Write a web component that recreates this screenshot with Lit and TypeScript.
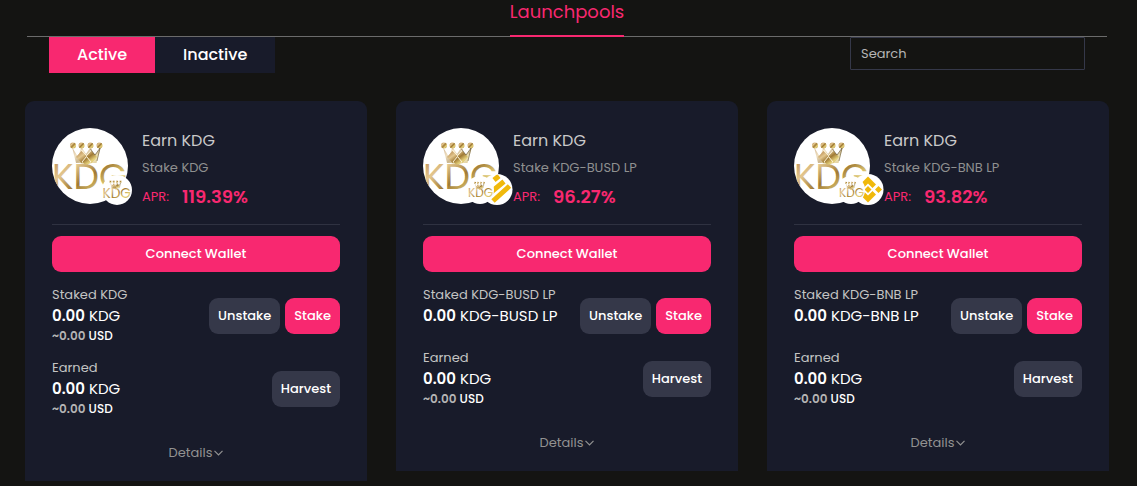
import { LitElement, html, css, svg, nothing } from "lit";
import { customElement, property, state } from "lit/decorators.js";

type Pair = "" | "BUSD" | "BNB";

interface Pool {
  token: string;
  pair: Pair;
  apr: string;
  stakedUsd: boolean;
}

const POOLS: Pool[] = [
  { token: "KDG", pair: "", apr: "119.39%", stakedUsd: true },
  { token: "KDG-BUSD LP", pair: "BUSD", apr: "96.27%", stakedUsd: false },
  { token: "KDG-BNB LP", pair: "BNB", apr: "93.82%", stakedUsd: false },
];

@customElement("pool-logo")
export class PoolLogo extends LitElement {
  static styles = css`
    :host {
      display: block;
      flex: none;
      width: 76px;
      height: 77px;
    }
    .logo {
      display: block;
      overflow: visible;
    }
    .word {
      font-family: Poppins, Lato, sans-serif;
      font-size: 36px;
    }
  `;

  @property() pair: Pair = "";

  private mark() {
    return svg`
      <g fill="url(#gold)">
        <circle cx="21" cy="17.500" r="3"></circle>
        <circle cx="29.500" cy="17.500" r="3"></circle>
        <circle cx="38.500" cy="17.500" r="3"></circle>
        <circle cx="47.500" cy="17.500" r="3"></circle>
        <path d="M20 19L26 29L29.500 19L34 26L38.500 19L42 28L49 19L44.500 35H40L34 37L28 35H24Z" opacity=".55"></path>
        <path d="M29.500 23L35 29L29.500 35L24 29ZM39.500 23L45 29L39.500 35L34 29ZM34.500 29L39 33.500L34.500 38L30 33.500Z"></path>
      </g>
      <path d="M29.500 22L34.500 27.500L39.500 22M30 34L34.500 28.500L39 34" fill="none" stroke="#fff6dc"></path>
      <path d="M38.500 21L43 27L48 20L45 33" fill="none" stroke="#4a3a1c" opacity=".5"></path>
      <text class="word" x="0" y="61" fill="url(#gold)">KDG</text>`;
  }

  private pairIcon() {
    if (this.pair === "BUSD") {
      return svg`<g fill="none" stroke="#f0b90b" stroke-width="5" transform="translate(74 61.500)">
        <path d="M-3 -9.500L2 -13.500M-10 6L7 -8M-4 11.500L12.500 -3.500"></path></g>`;
    }
    return svg`<g fill="#f0b90b" transform="translate(74 61.500)">
      <path d="M0 -13l8 8-3.500 3.500-4.500-4.500-4.500 4.500-3.500-3.500zM0 13l8-8-3.500-3.500-4.500 4.500-4.500-4.500-3.500 3.500zM0 -3.500l3.500 3.500-3.500 3.500-3.500-3.500zM10.500 -3.500l3.500 3.500-3.500 3.500-3.500-3.500z"></path></g>`;
  }

  render() {
    const small = this.pair
      ? { cx: 57, r: 14, place: "translate(45 49) scale(.335)" }
      : { cx: 65, r: 15, place: "translate(50.500 47) scale(.38)" };
    return html`<svg class="logo" width="76" height="77" viewBox="0 0 76 77" aria-hidden="true">
      <defs>
        <linearGradient id="gold" x1="0" y1="0" x2="1" y2="1">
          <stop offset="0" stop-color="#a8753a"></stop>
          <stop offset=".3" stop-color="#e3c78f"></stop>
          <stop offset=".5" stop-color="#a07a34"></stop>
          <stop offset=".7" stop-color="#e6d27c"></stop>
          <stop offset="1" stop-color="#b08a3c"></stop>
        </linearGradient>
        <clipPath id="disc"><circle cx="38" cy="38" r="38"></circle></clipPath>
        <clipPath id="pair"><circle cx="74" cy="61.500" r="15"></circle></clipPath>
      </defs>
      <circle cx="38" cy="38" r="38" fill="#fff"></circle>
      <g clip-path="url(#disc)">${this.mark()}</g>
      ${this.pair
        ? svg`<circle cx="74" cy="61.500" r="15.500" fill="#fff"></circle><g clip-path="url(#pair)">${this.pairIcon()}</g>`
        : nothing}
      <circle cx=${small.cx} cy="62" r=${small.r} fill="#fff"></circle>
      <g transform=${small.place}>${this.mark()}</g>
    </svg>`;
  }
}

@customElement("pool-card")
export class PoolCard extends LitElement {
  static styles = css`
    :host {
      display: block;
      background: #181b2a;
      border-radius: 9px 9px 0 0;
      padding: 27px 27px 6px;
    }
    .head {
      display: flex;
      gap: 14px;
      padding-bottom: 14px;
      border-bottom: 1px solid #2f3241;
    }
    .title {
      margin: 0;
      font-size: 16px;
      line-height: 26px;
      font-weight: 400;
      color: #c9c9c9;
    }
    .sub {
      margin: 3px 0 0;
      font-size: 13px;
      line-height: 22px;
      color: #8f9090;
    }
    .apr {
      display: flex;
      align-items: center;
      gap: 13px;
      margin: 5px 0 0;
      font-size: 13px;
      line-height: 26px;
      color: #f82870;
    }
    .rate {
      font-size: 18px;
      font-weight: 600;
    }
    button {
      font: inherit;
      border: 0;
      cursor: pointer;
    }
    .btn {
      height: 36px;
      padding: 0 9px;
      border-radius: 9px;
      background: #353849;
      color: #fff;
      font-size: 13px;
      font-weight: 500;
    }
    .pink {
      background: #f82870;
    }
    .wide {
      display: block;
      width: 100%;
      margin: 11px 0 13px;
    }
    .row {
      display: flex;
      justify-content: space-between;
      margin-bottom: 14px;
    }
    .actions {
      display: flex;
      gap: 5px;
      padding-top: 13px;
    }
    .label,
    .amount,
    .usd {
      margin: 0;
      white-space: nowrap;
    }
    .label {
      font-size: 13px;
      line-height: 20px;
      color: #c4c4c4;
    }
    .amount {
      font-size: 15px;
      line-height: 22px;
      color: #fff;
    }
    .usd {
      font-size: 12px;
      line-height: 17px;
      font-weight: 500;
      color: #fff;
    }
    .strong {
      font-weight: 600;
    }
    .value {
      font-weight: 600;
      color: #b5b5b5;
    }
    .details {
      display: flex;
      align-items: center;
      gap: 2px;
      margin: 0 auto;
      padding: 12px 0;
      background: none;
      color: #929292;
      font-size: 13px;
      line-height: 20px;
    }
  `;

  @property({ attribute: false }) pool!: Pool;

  render() {
    const { token, pair, apr, stakedUsd } = this.pool;
    const usd = html`<p class="usd"><b class="value">~0.00</b> USD</p>`;
    return html`
      <div class="head">
        <pool-logo .pair=${pair}></pool-logo>
        <div>
          <h2 class="title">Earn KDG</h2>
          <p class="sub">Stake ${token}</p>
          <p class="apr">APR: <span class="rate">${apr}</span></p>
        </div>
      </div>
      <button class="btn pink wide">Connect Wallet</button>
      <div class="row">
        <div>
          <p class="label">Staked ${token}</p>
          <p class="amount"><b class="strong">0.00</b> ${token}</p>
          ${stakedUsd ? usd : nothing}
        </div>
        <div class="actions">
          <button class="btn">Unstake</button>
          <button class="btn pink">Stake</button>
        </div>
      </div>
      <div class="row">
        <div>
          <p class="label">Earned</p>
          <p class="amount"><b class="strong">0.00</b> KDG</p>
          ${usd}
        </div>
        <div class="actions"><button class="btn">Harvest</button></div>
      </div>
      <button class="details">
        Details
        <svg width="9" height="6" viewBox="0 0 9 6" aria-hidden="true">
          <path d="M.5 .8L4.500 4.800L8.500 .8" fill="none" stroke="currentColor" stroke-width="1.200"></path>
        </svg>
      </button>
    `;
  }
}

@customElement("app-root")
export class AppRoot extends LitElement {
  static styles = css`
    :host {
      display: block;
      box-sizing: border-box;
      min-height: 100vh;
      padding: 0 28px 5px 25px;
      background: #141412;
      font-family: Poppins, Inter, sans-serif;
    }
    .nav {
      display: flex;
      justify-content: center;
      margin: 0 2px;
      border-bottom: 1px solid #6b6b6b;
    }
    .link {
      margin-bottom: -1px;
      padding-bottom: 11px;
      border-bottom: 2px solid #f82870;
      color: #f82870;
      font-size: 18px;
      line-height: 24px;
      text-decoration: none;
    }
    .bar {
      display: flex;
      justify-content: space-between;
      align-items: flex-start;
      padding: 0 24px;
      margin-bottom: 28px;
    }
    .tabs {
      display: flex;
    }
    .tab {
      height: 36px;
      padding: 0 28px 2px;
      border: 0;
      background: #181b2a;
      color: #fff;
      font: inherit;
      font-size: 16px;
      font-weight: 500;
      cursor: pointer;
    }
    .on {
      background: #f82870;
    }
    .search {
      box-sizing: border-box;
      width: 235px;
      height: 33px;
      padding: 0 10px;
      border: 1px solid #353849;
      border-radius: 1px;
      background: none;
      color: #fff;
      font: inherit;
      font-size: 13px;
    }
    .search::placeholder {
      color: #b5b5b5;
      opacity: 1;
    }
    .grid {
      display: grid;
      grid-template-columns: repeat(3, minmax(0, 1fr));
      gap: 29px;
      align-items: start;
    }
  `;

  @state() private tab = "Active";

  render() {
    return html`
      <nav class="nav"><a class="link" href="#">Launchpools</a></nav>
      <div class="bar">
        <div class="tabs">
          ${["Active", "Inactive"].map(
            (name) => html`<button class="tab ${name === this.tab ? "on" : ""}" @click=${() => (this.tab = name)}>${name}</button>`,
          )}
        </div>
        <input class="search" type="search" placeholder="Search" aria-label="Search" />
      </div>
      <main class="grid">${POOLS.map((pool) => html`<pool-card .pool=${pool}></pool-card>`)}</main>
    `;
  }
}
